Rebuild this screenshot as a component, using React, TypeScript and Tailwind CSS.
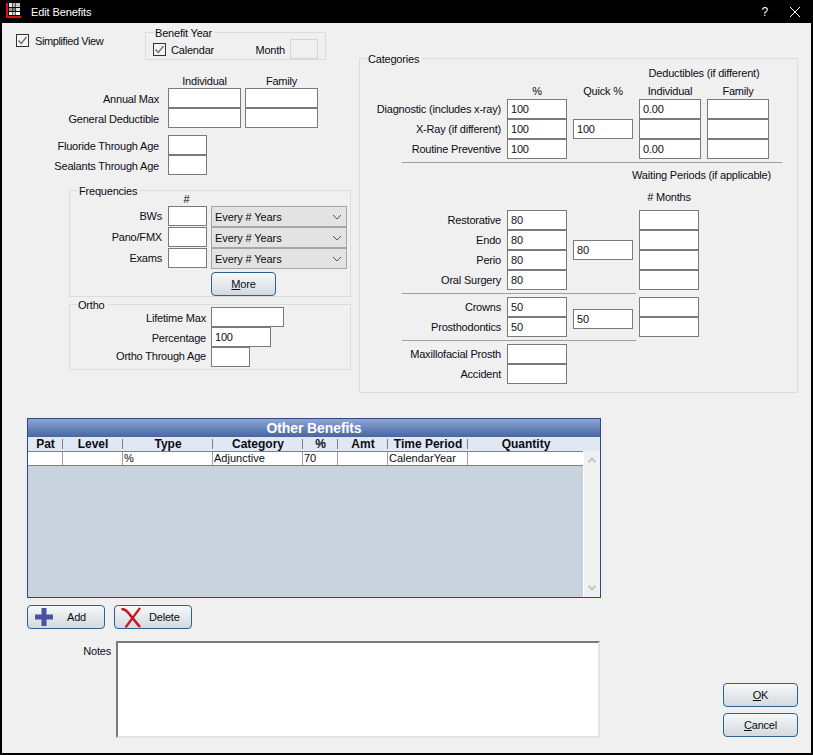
import React from "react";

const Box = ({ v, w = "w-[60px]", cls = "" }: { v?: string; w?: string; cls?: string }) => (
  <div className={`h-[20px] ${w} ${cls} bg-white border border-[#7a7a7a] pl-[3px] leading-[18px] text-[#101018]`}>{v}</div>
);

const Label = ({ t, w, lh = "leading-[21px]" }: { t: string; w: string; lh?: string }) => (
  <div className={`${w} ${lh} h-[20px] text-right whitespace-nowrap shrink-0`}>{t}</div>
);

const Check = () => (
  <svg width="13" height="13" viewBox="0 0 13 13" className="shrink-0">
    <rect x="0.5" y="0.5" width="12" height="12" fill="#f4f4f4" stroke="#333333" />
    <path d="M2.5 6.5 L5.2 9.5 L10.5 3" fill="none" stroke="#6b6b6b" strokeWidth="1.3" />
  </svg>
);

const Group = ({ title, cls, titleCls = "left-[7px]", children }: { title: string; cls: string; titleCls?: string; children: React.ReactNode }) => (
  <div className={`relative border border-[#dcdcdc] ${cls}`}>
    <span className={`absolute -top-[6px] ${titleCls} bg-[#f0f0f0] pl-px pr-[2px] leading-[13px] whitespace-nowrap`}>{title}</span>
    {children}
  </div>
);

const Btn = ({ children, cls = "" }: { children: React.ReactNode; cls?: string }) => (
  <div className={`h-[24px] rounded-[4px] border border-[#2c628f] bg-gradient-to-b from-[#f7f9fa] to-[#d3d9de] flex items-center justify-center ${cls}`}>
    {children}
  </div>
);

const Select = () => (
  <div className="h-[21px] w-[136px] bg-[#e3e3e3] border border-[#a6a6a6] flex items-center justify-between pl-[3px] pr-[4px]">
    <span className="pt-px tracking-[-0.1px]">Every # Years</span>
    <svg width="10" height="6" viewBox="0 0 10 6"><path d="M1 1 L5 5 L9 1" fill="none" stroke="#555" strokeWidth="1" /></svg>
  </div>
);

const FreqRow = ({ t }: { t: string }) => (
  <div className="flex h-[21px]">
    <div className="w-[92px] text-right leading-[20px] whitespace-nowrap">{t}</div>
    <Box w="w-[39px] ml-[6px]" />
    <div className="ml-[4px]"><Select /></div>
  </div>
);

const Hr = ({ w }: { w: string }) => <div className={`h-px ${w} ml-[42px] my-[3px] bg-[#a0a0a0]`} />;

const cat = "grid grid-cols-[141px_60px_60px_62px_62px] gap-x-[6px] auto-rows-[20px]";

const cols = "grid grid-cols-[35px_60px_90px_90px_35px_50px_80px_116px]";
const heads = ["Pat", "Level", "Type", "Category", "%", "Amt", "Time Period", "Quantity"];
const cells = ["", "", "%", "Adjunctive", "70", "", "CalendarYear", ""];

const top = "leading-[23px]";

export default function App() {
  return (
    <div className="w-[813px] h-[755px] bg-black px-[2px] pb-[2px] flex flex-col text-[11px] tracking-[-0.2px] text-[#0c0c14] overflow-hidden" style={{ fontFamily: '"Liberation Sans", Arial, sans-serif' }}>
      {/* Title bar */}
      <div className="h-[23px] flex items-center text-white shrink-0">
        <svg width="15" height="15" viewBox="0 0 15 15" className="ml-[4px] -mt-[2px]">
          <path d="M1 0 V14 H15" fill="none" stroke="#e01010" strokeWidth="2" />
          <rect x="3" y="0" width="3" height="4" fill="#e8e8e8" /><rect x="6.5" y="0" width="3" height="4" fill="#b0b0b0" /><rect x="10" y="0" width="4" height="4" fill="#c8c8c8" />
          <rect x="3" y="5" width="3" height="3" fill="#9a9a9a" /><rect x="6.5" y="5" width="3" height="3" fill="#777777" /><rect x="10" y="5" width="4" height="3" fill="#dddddd" />
          <rect x="3" y="9" width="3" height="3" fill="#f4f4f4" /><rect x="6.5" y="9" width="3" height="3" fill="#cccccc" /><rect x="10" y="9" width="4" height="3" fill="#ffffff" />
        </svg>
        <span className="ml-[10px] tracking-[-0.1px] leading-[20px]">Edit Benefits</span>
        <span className="ml-auto text-[12px]">?</span>
        <svg width="12" height="12" viewBox="0 0 12 12" className="ml-[21px] mr-[10px]"><path d="M1 1 L11 11 M11 1 L1 11" stroke="#fff" strokeWidth="1" /></svg>
      </div>

      {/* Body */}
      <div className="flex-1 bg-[#f0f0f0] flex flex-col">
        <div className="flex h-[395px]">
          {/* Left column */}
          <div className="w-[357px] shrink-0 flex flex-col">
            <div className="flex mt-[9px] h-[28px]">
              <div className="ml-[14px] w-[129px] flex items-start pt-[2px]">
                <Check /><span className="ml-[6px] leading-[14px] tracking-[-0.4px]">Simplified View</span>
              </div>
              <Group title="Benefit Year" cls="w-[181px] h-[28px] flex items-center pt-[6px] pl-[7px]" titleCls="left-[8px]">
                <Check /><span className="ml-[5px] mt-[2px]">Calendar</span>
                <span className="ml-auto mr-[5px] mt-[2px]">Month</span>
                <div className="w-[28px] h-[20px] mr-[7px] border border-[#d4d4d4] bg-[#f0f0f0]" />
              </Group>
            </div>

            <div className="flex ml-[166px] mt-[15px] h-[13px] gap-x-[4px] leading-[13px] text-center">
              <div className="w-[73px]">Individual</div><div className="w-[73px]">Family</div>
            </div>
            <div className="flex"><Label t="Annual Max" w="w-[157px]" lh={top} /><Box w="w-[73px] ml-[9px]" /><Box w="w-[73px] ml-[4px]" /></div>
            <div className="flex"><Label t="General Deductible" w="w-[157px]" lh={top} /><Box w="w-[73px] ml-[9px]" /><Box w="w-[73px] ml-[4px]" /></div>
            <div className="flex mt-[7px]"><Label t="Fluoride Through Age" w="w-[157px]" lh={top} /><Box w="w-[39px] ml-[9px]" /></div>
            <div className="flex"><Label t="Sealants Through Age" w="w-[157px]" lh={top} /><Box w="w-[39px] ml-[9px]" /></div>

            <Group title="Frequencies" cls="ml-[67px] mt-[15px] w-[282px] h-[107px] pt-[2px]" titleCls="left-[8px]">
              <div className="h-[13px] ml-[97px] w-[39px] text-center leading-[13px]">#</div>
              <FreqRow t="BWs" /><FreqRow t="Pano/FMX" /><FreqRow t="Exams" />
              <Btn cls="w-[65px] ml-[141px] mt-[3px]"><span><u>M</u>ore</span></Btn>
            </Group>

            <Group title="Ortho" cls="ml-[67px] mt-[7px] w-[282px] h-[66px] pt-[2px]">
              <div className="flex"><Label t="Lifetime Max" w="w-[136px]" lh={top} /><Box w="w-[73px] ml-[5px]" /></div>
              <div className="flex"><Label t="Percentage" w="w-[136px]" lh={top} /><Box v="100" w="w-[60px] ml-[5px]" /></div>
              <div className="flex"><Label t="Ortho Through Age" w="w-[136px]" lh="leading-[19px]" /><Box w="w-[39px] ml-[5px]" /></div>
            </Group>
          </div>

          {/* Categories */}
          <Group title="Categories" cls="mt-[35px] w-[439px] h-[335px] pt-[8px]">
            <div className="h-[13px] leading-[13px] ml-[279px] w-[130px] text-center whitespace-nowrap">Deductibles (if different)</div>
            <div className={`${cat} mt-[5px] !auto-rows-[14px] leading-[13px] text-center`}>
              <div /><div>%</div><div>Quick %</div><div>Individual</div><div>Family</div>
            </div>
            <div className={cat}>
              <Label t="Diagnostic (includes x-ray)" w="" /><Box v="100" /><div /><Box v="0.00" w="w-[62px]" /><Box w="w-[62px]" />
              <Label t="X-Ray (if different)" w="" /><Box v="100" /><Box v="100" /><Box w="w-[62px]" /><Box w="w-[62px]" />
              <Label t="Routine Preventive" w="" /><Box v="100" /><div /><Box v="0.00" w="w-[62px]" /><Box w="w-[62px]" />
            </div>
            <Hr w="w-[380px]" />
            <div className="h-[14px] mt-[5px] leading-[14px] text-right pr-[26px] whitespace-nowrap">Waiting Periods (if applicable)</div>
            <div className="h-[14px] mt-[8px] leading-[14px] ml-[279px] w-[60px] text-center">
              # Months
            </div>
            <div className={`${cat} mt-[6px]`}>
              <Label t="Restorative" w="" /><Box v="80" /><div className="row-span-4 self-center"><Box v="80" /></div><Box /><div />
              <Label t="Endo" w="" /><Box v="80" /><Box /><div />
              <Label t="Perio" w="" /><Box v="80" /><Box /><div />
              <Label t="Oral Surgery" w="" /><Box v="80" /><Box /><div />
            </div>
            <Hr w="w-[234px]" />
            <div className={cat}>
              <Label t="Crowns" w="" /><Box v="50" /><div className="row-span-2 pt-[12px]"><Box v="50" /></div><Box /><div />
              <Label t="Prosthodontics" w="" /><Box v="50" /><Box /><div />
            </div>
            <Hr w="w-[234px]" />
            <div className={cat}>
              <Label t="Maxillofacial Prosth" w="" /><Box />
              <div className="col-span-3" />
              <Label t="Accident" w="" /><Box />
            </div>
          </Group>
        </div>

        {/* Other benefits grid */}
        <div className="ml-[25px] w-[574px] h-[180px] border border-[#2b4a80] bg-[#c9d3dd] flex flex-col shrink-0 tracking-normal">
          <div className="h-[18px] bg-gradient-to-b from-[#8ea6dc] to-[#47669f] text-white font-bold text-[14px] tracking-[-0.1px] leading-[19px] text-center">Other Benefits</div>
          <div className={`${cols} h-[14px] bg-[#dfe8f3] font-bold text-[12px] leading-[14px] text-center`}>
            {heads.map((h, i) => (
              <div key={h} className="relative">
                {h}
                {i < 7 && <span className="absolute right-0 top-[2px] h-[10px] w-px bg-[#808080]" />}
              </div>
            ))}
          </div>
          <div className="flex-1 flex min-h-0">
            <div className={`${cols} h-[15px] w-[555px] bg-white border-t border-b border-[#808080] leading-[13px]`}>
              {cells.map((c, i) => (
                <div key={i} className={`pl-px ${i < 7 ? "border-r border-[#a0a0a0]" : ""}`}>{c}</div>
              ))}
            </div>
            <div className="w-px bg-white" />
            <div className="flex-1 bg-[#f0f0f0] flex flex-col items-center justify-between py-[6px]">
              <svg width="8" height="6" viewBox="0 0 8 6"><path d="M0.5 5 L4 1.5 L7.5 5" fill="none" stroke="#c4c4c4" strokeWidth="2" /></svg>
              <svg width="8" height="6" viewBox="0 0 8 6"><path d="M0.5 1 L4 4.5 L7.5 1" fill="none" stroke="#c4c4c4" strokeWidth="2" /></svg>
            </div>
          </div>
        </div>

        {/* Add / Delete */}
        <div className="flex ml-[25px] mt-[7px] gap-x-[9px]">
          <Btn cls="w-[78px] !justify-start pl-[7px]">
            <svg width="18" height="18" viewBox="0 0 18 18"><path d="M6.5 0 H11.5 V6.5 H18 V11.5 H11.5 V18 H6.5 V11.5 H0 V6.5 H6.5 Z" fill="#4a52a6" /></svg>
            <span className="ml-[14px]">Add</span>
          </Btn>
          <Btn cls="w-[78px] !justify-start pl-[6px]">
            <svg width="21" height="21" viewBox="0 0 21 21">
              <path d="M0.5 2.5 C3 1.5 5 3 7 5.5 L19 20" fill="none" stroke="#c8141e" strokeWidth="2.6" />
              <path d="M19 1 L4.5 20.5" fill="none" stroke="#c8141e" strokeWidth="2.2" />
            </svg>
            <span className="ml-[7px]">Delete</span>
          </Btn>
        </div>

        {/* Notes and actions */}
        <div className="flex mt-[12px]">
          <div className="w-[109px] text-right leading-[20px]">Notes</div>
          <div className="ml-[5px] w-[484px] h-[97px] bg-white border-t-2 border-l-2 border-t-[#7a7a7a] border-l-[#7a7a7a] border-r-2 border-b-2 border-r-[#e4e4e4] border-b-[#e4e4e4]" />
          <div className="ml-[123px] self-end mb-px flex flex-col gap-y-[6px]">
            <Btn cls="w-[75px]"><span><u>O</u>K</span></Btn>
            <Btn cls="w-[75px]"><span><u>C</u>ancel</span></Btn>
          </div>
        </div>
      </div>
    </div>
  );
}
